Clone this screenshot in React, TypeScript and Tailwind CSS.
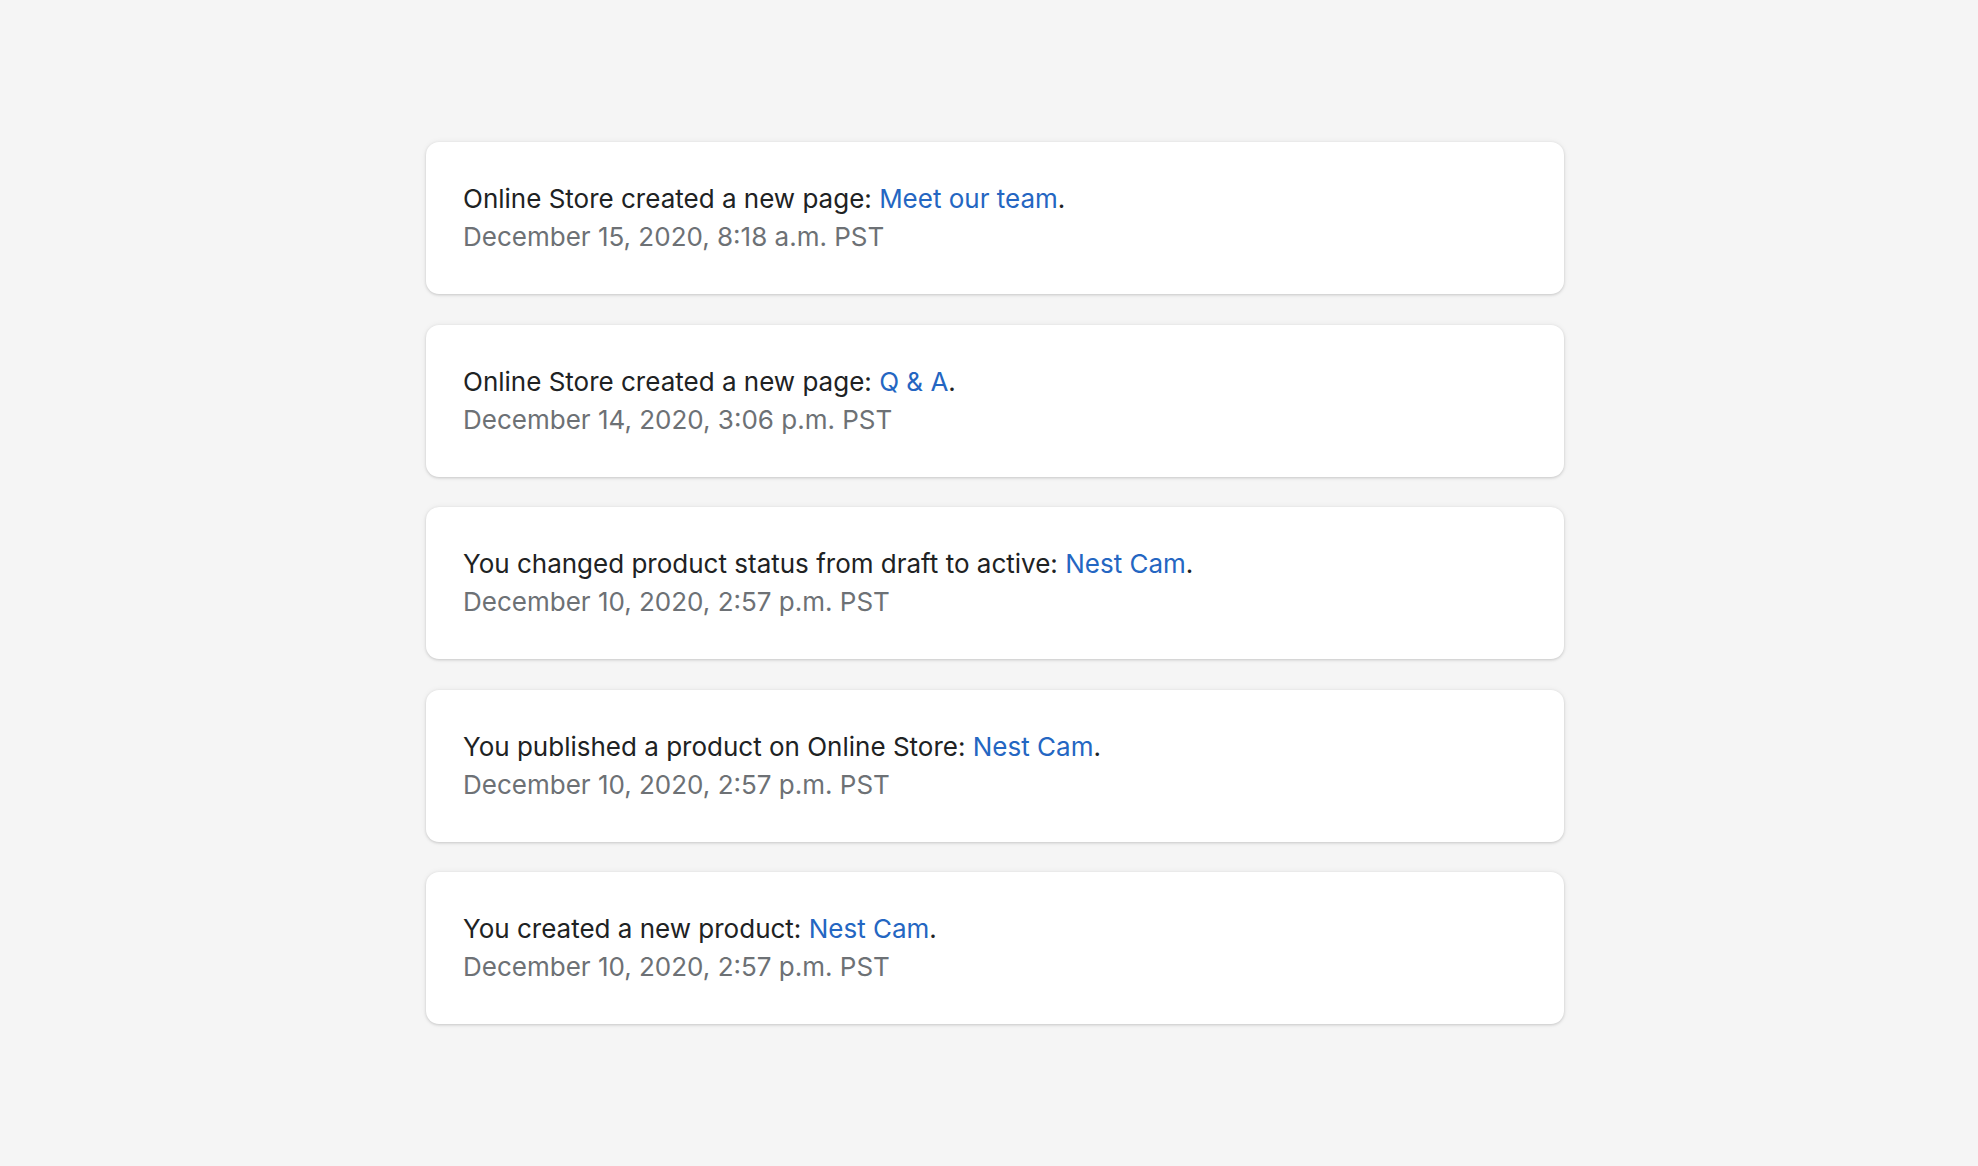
const events = [
  { pre: "Online Store created a new page: ", link: "Meet our team", date: "December 15, 2020, 8:18 a.m. PST" },
  { pre: "Online Store created a new page: ", link: "Q & A", date: "December 14, 2020, 3:06 p.m. PST" },
  { pre: "You changed product status from draft to active: ", link: "Nest Cam", date: "December 10, 2020, 2:57 p.m. PST" },
  { pre: "You published a product on Online Store: ", link: "Nest Cam", date: "December 10, 2020, 2:57 p.m. PST" },
  { pre: "You created a new product: ", link: "Nest Cam", date: "December 10, 2020, 2:57 p.m. PST" },
];

export default function App() {
  return (
    <div
      className="min-h-screen w-full bg-[#f5f5f5] flex justify-center pt-[142px] pb-[142px]"
      style={{ fontFamily: "Inter, 'Noto Sans', sans-serif" }}
    >
      <div className="w-[1138px] flex flex-col gap-[30.5px] ml-[12px]">
        {events.map((e, i) => (
          <div
            key={i}
            className="bg-white rounded-[13px] px-[37px] pt-[38px] pb-[38px] shadow-[0_0_6px_rgba(23,24,24,0.06),0_1px_3px_rgba(0,0,0,0.16)]"
          >
            <p className="text-[26px] leading-[38px] text-[#202223]">
              {e.pre}
              <a href="#" className="text-[#2466c2]">{e.link}</a>.
            </p>
            <p className="text-[26px] leading-[38px] text-[#6d7175]">{e.date}</p>
          </div>
        ))}
      </div>
    </div>
  );
}
